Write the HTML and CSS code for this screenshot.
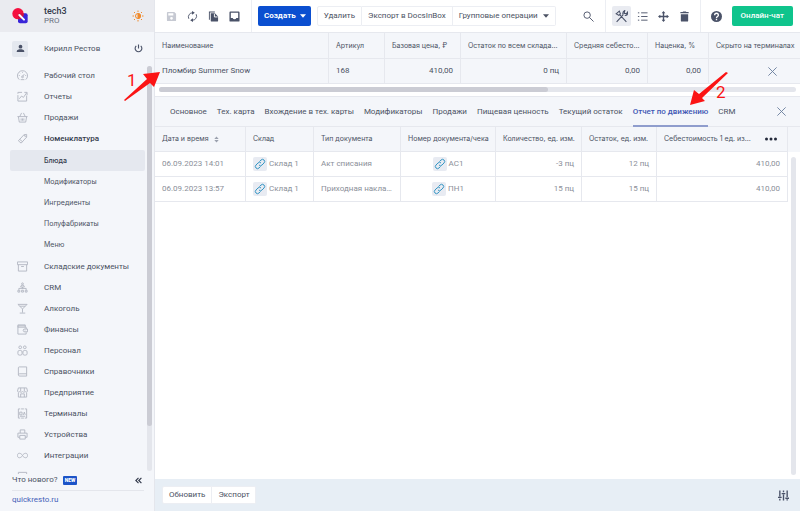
FILE: index.html
```html
<!DOCTYPE html>
<html lang="ru">
<head>
  <meta charset="UTF-8">
  <meta name="viewport" content="width=device-width, initial-scale=1">
  <title>Quick Resto — Блюда</title>
  <link rel="stylesheet" href="styles.css">
</head>
<body>
  <svg class="sprite" aria-hidden="true">
    <symbol id="i-link" viewBox="0 0 24 24"><path d="M10 14a4 4 0 0 0 6 0l4-4a4 4 0 0 0-6-6l-3 3M14 10a4 4 0 0 0-6 0l-4 4a4 4 0 0 0 6 6l3-3"/></symbol>
    <symbol id="i-close" viewBox="0 0 24 24"><path d="M3 3l18 18M21 3L3 21"/></symbol>
    <symbol id="i-caret" viewBox="0 0 10 6"><path d="M0 0h10L5 6z"/></symbol>
  </svg>

  <aside class="sidebar">
    <header class="brand">
      <svg class="logo" viewBox="0 0 48 48">
        <rect x="18" y="16" width="29" height="30" rx="6" fill="#3a25d8"/>
        <circle cx="18" cy="17" r="17" fill="#f5103f"/>
        <path d="M18 34a17 17 0 0 0 17-17v-1H22q-4 0-4 5z" fill="#d3133f"/>
        <path d="M22 21l14 14" stroke="#fff" stroke-width="6" stroke-linecap="round"/>
      </svg>
      <div class="brand-name">
        <b>tech3</b>
        <span>PRO</span>
      </div>
      <button class="icon-btn" aria-label="Тема">
        <svg class="sun" viewBox="0 0 24 24"><circle cx="12" cy="12" r="5"/><path class="fill" d="M12 7a5 5 0 0 1 0 10z"/><path d="M12 1v3M12 20v3M1 12h3M20 12h3M4 4l2 2M18 18l2 2M4 20l2-2M18 6l2-2"/></svg>
      </button>
    </header>

    <div class="user">
      <span class="avatar">
        <svg viewBox="0 0 24 24"><circle cx="12" cy="7" r="5"/><path d="M2 21v-2c0-4 6-5 10-5s10 1 10 5v2z"/></svg>
      </span>
      <span class="user-name">Кирилл Рестов</span>
      <button class="icon-btn" aria-label="Выход">
        <svg class="power" viewBox="0 0 24 24"><path d="M12 1v11M6 5a9 9 0 1 0 12 0"/></svg>
      </button>
    </div>

    <div class="nav-wrap">
      <nav class="nav">
        <a href="#"><svg viewBox="0 0 24 24"><path d="M5 21a11 11 0 1 1 14 0M8 21h8M12 14l4-5M12 4v2M4 12h2M18 12h2M6 6l1 1"/><circle cx="12" cy="15" r="2"/></svg>Рабочий стол</a>
        <a href="#"><svg viewBox="0 0 24 24"><path d="M2 9v13h19V10M2 6V3h9M5 17l5-6 4 3 7-10M16 3h6v6"/></svg>Отчеты</a>
        <a href="#"><svg viewBox="0 0 24 24"><path d="M1 10h22M3 10l2 12h14l2-12M6 10l4-8M18 10l-4-8M9 14v5M12 14v5M15 14v5"/></svg>Продажи</a>
        <a href="#" class="open"><svg viewBox="0 0 24 24"><path d="M3 17L15 4l6-1 0 6L9 22zM15 4l6 5M6 14l6 5M17 7v1"/></svg>Номенклатура</a>
        <div class="subnav">
          <a href="#" class="active">Блюда</a>
          <a href="#">Модификаторы</a>
          <a href="#">Ингредиенты</a>
          <a href="#">Полуфабрикаты</a>
          <a href="#">Меню</a>
        </div>
        <a href="#"><svg viewBox="0 0 24 24"><path d="M1 2h22v6H1zM3 8v14h18V8M9 12h6"/></svg>Складские документы</a>
        <a href="#"><svg viewBox="0 0 24 24"><circle cx="12" cy="4" r="2"/><path d="M8 11q0-4 4-4t4 4zM12 11v3M4 17v-3h16v3"/><path d="M2 22v-4h4v4zM10 22v-4h4v4zM18 22v-4h4v4z"/></svg>CRM</a>
        <a href="#"><svg viewBox="0 0 24 24"><path d="M2 3h20l-10 10zM12 13v8M6 22h12M6 7h12"/></svg>Алкоголь</a>
        <a href="#"><svg viewBox="0 0 24 24"><path d="M2 5v17h18v-4M20 11V7H2V2h16v5M2 4h16M15 11h8v6h-8q-3-3 0-6zM17 14h1"/></svg>Финансы</a>
        <a href="#"><svg viewBox="0 0 24 24"><circle cx="7" cy="5" r="3"/><circle cx="17" cy="5" r="3"/><rect x="2" y="12" width="9" height="10" rx="3"/><rect x="13" y="12" width="9" height="10" rx="3"/></svg>Персонал</a>
        <a href="#"><svg viewBox="0 0 24 24"><path d="M5 2h16v20H6q-3 0-3-3V4q0-2 2-2zM3 19q0-2 3-2h15"/></svg>Справочники</a>
        <a href="#"><svg viewBox="0 0 24 24"><path d="M3 2h18l2 7q-2 4-5 1-3 3-6 0-3 3-6 0-3 3-5-1zM8 2v7M16 2v7M3 12v10h18V12M8 22v-7h8v7"/></svg>Предприятие</a>
        <a href="#"><svg viewBox="0 0 24 24"><path d="M7 2H3v20h4M17 2h4v20h-4M9 2h6M9 22h6M6 9h5v6H6zM14 15l2-6 2 6M6 18h12"/></svg>Терминалы</a>
        <a href="#"><svg viewBox="0 0 24 24"><path d="M7 9V2h10v7M6 18H2V9h20v9h-4M6 14h12v8H6z"/></svg>Устройства</a>
        <a href="#"><svg viewBox="0 0 24 24"><path d="M12 12c-3-6-11-7-11 0s8 6 11 0 11-7 11 0-8 6-11 0z"/></svg>Интеграции</a>
        <a href="#"><svg viewBox="0 0 24 24"><path d="M3 3h18v18H3z"/></svg>Подписка и оплата</a>
      </nav>
      <div class="vbar"><div class="vbar-thumb"></div></div>
    </div>

    <footer class="side-foot">
      <div class="news">
        <span>Что нового?</span>
        <span class="new">NEW</span>
        <button class="icon-btn" aria-label="Свернуть">
          <svg class="collapse" viewBox="0 0 24 24"><path d="M12 3l-9 9 9 9M22 3l-9 9 9 9"/></svg>
        </button>
      </div>
      <a class="site" href="#">quickresto.ru</a>
    </footer>
  </aside>

  <main class="main">
    <div class="toolbar">
      <div class="tools">
        <button class="icon-btn muted" aria-label="Сохранить"><svg viewBox="0 0 24 24"><path fill-rule="evenodd" d="M2 4q0-2 2-2h14l4 4v14q0 2-2 2H4q-2 0-2-2zM5 5v5h11V5zM12 13a3 3 0 1 0 0 6 3 3 0 0 0 0-6z"/></svg></button>
        <button class="icon-btn" aria-label="Обновить"><svg class="line thin" viewBox="0 0 24 24"><path d="M4 17a9 9 0 0 1 9-13M20 7a9 9 0 0 1-9 13"/><path class="fill" d="M11 0l6 4-6 4zM13 16l-6 4 6 4z"/></svg></button>
        <button class="icon-btn" aria-label="Копировать"><svg viewBox="0 0 24 24"><path d="M2 1h13v2H4v16H2zM6 5h9l7 7v10q0 1-1 1H7q-1 0-1-1z"/><path d="M14 6v7h7" fill="none" stroke="#fff" stroke-width="2"/></svg></button>
        <button class="icon-btn" aria-label="Архив"><svg viewBox="0 0 24 24"><path fill-rule="evenodd" d="M3 1h18q2 0 2 2v18q0 2-2 2H3q-2 0-2-2V3q0-2 2-2zM4 4v11h4q1 3 4 3t4-3h4V4z"/></svg></button>
      </div>
      <div class="actions">
        <button class="create">Создать <svg class="caret"><use href="#i-caret"/></svg></button>
        <div class="btn-group">
          <button>Удалить</button>
          <button>Экспорт в DocsInBox</button>
          <button>Групповые операции <svg class="caret"><use href="#i-caret"/></svg></button>
        </div>
      </div>
      <button class="icon-btn search" aria-label="Поиск"><svg class="line thin" viewBox="0 0 24 24"><circle cx="9" cy="9" r="7"/><path d="M14 14l9 9"/></svg></button>
      <div class="views">
        <button class="icon-btn pressed" aria-label="Инструменты"><svg class="line tool" viewBox="0 0 24 24"><path d="M3 22L15 9M9 9l12 13M2 7l6-5 2 5-3 3zM15 9q-2-5 3-8l-1 5 4 1 2-3q1 7-5 6"/></svg></button>
        <button class="icon-btn" aria-label="Список"><svg class="line thin" viewBox="0 0 24 24"><path d="M2 4h3M9 4h14M2 12h3M9 12h14M2 20h3M9 20h14"/></svg></button>
        <button class="icon-btn" aria-label="Переместить"><svg class="line" viewBox="0 0 24 24"><path d="M12 3v18M3 12h18"/><path class="fill" d="M12 0l4 5H8zM12 24l4-5H8zM0 12l5-4v8zM24 12l-5-4v8z"/></svg></button>
        <button class="icon-btn" aria-label="Корзина"><svg viewBox="0 0 24 24"><path d="M3 2h5l1-1h6l1 1h5v3H3zM4 7h16v14q0 2-2 2H6q-2 0-2-2z"/></svg></button>
      </div>
      <div class="help">
        <button class="icon-btn" aria-label="Помощь"><svg class="question" viewBox="0 0 24 24"><circle cx="12" cy="12" r="12"/><path d="M8 9q0-4 4-4t4 4c0 3-4 3-4 6M12 17v3" fill="none" stroke="#fff" stroke-width="3"/></svg></button>
        <button class="chat">Онлайн-чат</button>
      </div>
    </div>

    <table class="grid goods">
      <colgroup><col class="w174"><col class="w56"><col class="w76"><col class="w106"><col class="w81"><col class="w61"><col></colgroup>
      <thead>
        <tr>
          <th>Наименование</th>
          <th>Артикул</th>
          <th>Базовая цена, ₽</th>
          <th>Остаток по всем складам, ед. изм.</th>
          <th>Средняя себестоимость</th>
          <th>Наценка, %</th>
          <th>Скрыто на терминалах</th>
        </tr>
      </thead>
      <tbody>
        <tr>
          <td>Пломбир Summer Snow</td>
          <td>168</td>
          <td class="num">410,00</td>
          <td class="num">0 пц</td>
          <td class="num">0,00</td>
          <td class="num">0,00</td>
          <td class="hidden-mark"><svg class="cross"><use href="#i-close"/></svg></td>
        </tr>
      </tbody>
    </table>
    <div class="hbar"><div class="hbar-thumb"></div></div>

    <div class="tabs">
      <a href="#">Основное</a>
      <a href="#">Тех. карта</a>
      <a href="#">Вхождение в тех. карты</a>
      <a href="#">Модификаторы</a>
      <a href="#">Продажи</a>
      <a href="#">Пищевая ценность</a>
      <a href="#">Текущий остаток</a>
      <a href="#" class="active">Отчет по движению</a>
      <a href="#">CRM</a>
      <button class="icon-btn" aria-label="Закрыть"><svg class="cross"><use href="#i-close"/></svg></button>
    </div>

    <div class="report">
      <table class="grid moves">
        <colgroup><col class="w91"><col class="w68"><col class="w87"><col class="w95"><col class="w86"><col class="w75"><col></colgroup>
        <thead>
          <tr>
            <th>Дата и время <svg class="sort" viewBox="0 0 10 16"><path d="M0 7l5-6 5 6zM0 9l5 6 5-6z"/></svg></th>
            <th>Склад</th>
            <th>Тип документа</th>
            <th>Номер документа/чека</th>
            <th>Количество, ед. изм.</th>
            <th>Остаток, ед. изм.</th>
            <th><div class="last-head"><span>Себестоимость 1 ед. измерения</span><button class="icon-btn" aria-label="Колонки"><svg class="dots" viewBox="0 0 24 8"><circle cx="3" cy="4" r="3"/><circle cx="12" cy="4" r="3"/><circle cx="21" cy="4" r="3"/></svg></button></div></th>
          </tr>
        </thead>
        <tbody>
          <tr>
            <td>06.09.2023 14:01</td>
            <td><div class="ref"><a href="#" aria-label="Открыть"><svg><use href="#i-link"/></svg></a>Склад 1</div></td>
            <td>Акт списания</td>
            <td><div class="ref center"><a href="#" aria-label="Открыть"><svg><use href="#i-link"/></svg></a>АС1</div></td>
            <td class="num">-3 пц</td>
            <td class="num">12 пц</td>
            <td class="num">410,00</td>
          </tr>
          <tr>
            <td>06.09.2023 13:57</td>
            <td><div class="ref"><a href="#" aria-label="Открыть"><svg><use href="#i-link"/></svg></a>Склад 1</div></td>
            <td>Приходная накладная</td>
            <td><div class="ref center"><a href="#" aria-label="Открыть"><svg><use href="#i-link"/></svg></a>ПН1</div></td>
            <td class="num">15 пц</td>
            <td class="num">15 пц</td>
            <td class="num">410,00</td>
          </tr>
        </tbody>
      </table>
      <div class="gutter"><div class="gutter-bar"></div></div>
    </div>

    <footer class="bottom">
      <div class="btn-group">
        <button>Обновить</button>
        <button>Экспорт</button>
      </div>
      <button class="icon-btn" aria-label="Настройки"><svg class="line" viewBox="0 0 24 24"><path d="M4 1v13M4 19v4M12 1v4M12 10v13M20 1v14M20 20v3M0 16h8M8 8h8M16 18h8"/></svg></button>
    </footer>
  </main>

  <!-- callouts over the page -->
  <div class="callout first">
    <svg viewBox="0 0 36 30"><path d="M0 28L23 7l-4-5L36 0l-6 15-4-4L1 29z"/></svg>
    <span>1</span>
  </div>
  <div class="callout second">
    <svg viewBox="0 0 38 34"><path d="M36 0L9 22 4 18 0 33l15-4-3-3L38 1z"/></svg>
    <span>2</span>
  </div>
</body>
</html>
```
FILE: styles.css
```css
* {
  box-sizing: border-box;
}
body {
  margin: 0;
  display: flex;
  height: 100vh;
  overflow: hidden;
  font-family: Roboto, "Liberation Sans", sans-serif;
  font-size: 8px;
  line-height: 12px;
  color: #4b5263;
  background: #fff;
}
a {
  color: inherit;
  text-decoration: none;
}
button {
  font: inherit;
  color: inherit;
  cursor: pointer;
}
svg {
  display: block;
  flex: none;
}
.sprite {
  position: absolute;
  width: 0;
  height: 0;
}
.icon-btn {
  display: flex;
  align-items: center;
  justify-content: center;
  padding: 0;
  border: 0;
  background: none;
  color: #4a5268;
}
.icon-btn svg {
  width: 11px;
  height: 11px;
  fill: currentColor;
}
.icon-btn .line {
  fill: none;
  stroke: currentColor;
  stroke-width: 3;
}
.icon-btn .thin {
  stroke-width: 2;
}
.icon-btn .tool {
  width: 13px;
  height: 13px;
  stroke-width: 2;
}
.icon-btn .line .fill {
  fill: currentColor;
  stroke: none;
}

/* sidebar */
.sidebar {
  flex: none;
  display: flex;
  flex-direction: column;
  width: 155px;
  background: #f4f6fa;
  border-right: 1px solid #e4e6ec;
}
.brand {
  display: flex;
  align-items: center;
  height: 32px;
  padding: 0 10px 0 12px;
  background: #eaebf0;
}
.brand .logo {
  width: 16px;
  height: 16px;
}
.brand-name {
  flex: 1;
  display: flex;
  flex-direction: column;
  margin-left: 16px;
  line-height: 10px;
}
.brand-name b {
  font-weight: 500;
  font-size: 9px;
  color: #343b4c;
}
.brand-name span {
  color: #6b7180;
}
.icon-btn .sun {
  width: 12px;
  height: 12px;
  fill: none;
  stroke: #f08a2c;
  stroke-width: 2;
}
.icon-btn .sun .fill {
  fill: #f08a2c;
}
.user {
  display: flex;
  align-items: center;
  height: 33px;
  padding: 0 11px 0 12px;
}
.avatar {
  display: flex;
  align-items: center;
  justify-content: center;
  width: 16px;
  height: 16px;
  border-radius: 2px;
  background: #e4e8ef;
}
.avatar svg {
  width: 9px;
  height: 9px;
  fill: #4a5268;
}
.user-name {
  flex: 1;
  margin-left: 16px;
}
.icon-btn .power {
  width: 9px;
  height: 9px;
  fill: none;
  stroke: #4a5268;
  stroke-width: 3;
}
.nav-wrap {
  flex: 1;
  display: flex;
  min-height: 0;
  overflow: hidden;
}
.nav {
  flex: 1;
  padding-left: 10px;
}
.nav a {
  display: flex;
  align-items: center;
  gap: 16px;
  height: 21px;
  padding-left: 7px;
  white-space: nowrap;
}
.nav svg {
  width: 11px;
  height: 11px;
  fill: none;
  stroke: #b2b7c2;
  stroke-width: 2;
}
.nav .open {
  color: #343b4c;
  font-weight: 500;
}
.subnav {
  padding: 1px 0;
  font-family: Inter, Roboto, sans-serif;
  font-size: 7px;
}
.nav .subnav a {
  padding-left: 34px;
}
.nav .subnav .active {
  border-radius: 2px;
  background: #e5e8ef;
  color: #343b4c;
  font-weight: 500;
}
.vbar {
  width: 5px;
  margin: 1px 2px 3px;
  border-radius: 3px;
  background: #e4e6ec;
}
.vbar-thumb {
  height: 89%;
  border-radius: 3px;
  background: #cbccd4;
}
.side-foot {
  padding: 0 10px 5px 12px;
}
.news {
  display: flex;
  align-items: center;
  gap: 5px;
  height: 17px;
  padding-bottom: 4px;
  border-bottom: 1px solid #e4e6ec;
}
.news .icon-btn {
  margin: 0 2px 0 auto;
}
.new {
  padding: 0 2px;
  border-radius: 1px;
  background: #1c54c8;
  color: #fff;
  font-size: 5px;
  font-weight: 900;
  line-height: 9px;
}
.icon-btn .collapse {
  width: 7px;
  height: 7px;
  fill: none;
  stroke: #343b4c;
  stroke-width: 4;
}
.site {
  display: block;
  margin-top: 3px;
  color: #4560b8;
}

/* toolbar */
.main {
  flex: 1;
  min-width: 0;
  display: flex;
  flex-direction: column;
}
.toolbar {
  display: flex;
  height: 32px;
}
.tools,
.views,
.actions,
.help {
  display: flex;
  align-items: center;
}
.tools {
  gap: 10px;
  padding: 0 11px;
  border-right: 1px solid #eceef3;
}
.icon-btn.muted {
  color: #c6c9d2;
}
.actions {
  flex: 1;
  gap: 6px;
  padding-left: 6px;
}
.create,
.chat {
  display: flex;
  align-items: center;
  gap: 4px;
  height: 20px;
  padding: 0 5px 0 6px;
  border: 0;
  border-radius: 2px;
  background: #0b4fd0;
  color: #fff;
  font-weight: 700;
}
.chat {
  padding: 0 9px;
  background: #0fc48c;
  font-weight: 500;
}
.caret {
  width: 6px;
  height: 4px;
  fill: currentColor;
}
.btn-group {
  display: flex;
}
.btn-group button {
  display: flex;
  align-items: center;
  gap: 5px;
  height: 20px;
  padding: 0 6px;
  border: 1px solid #eceef3;
  border-left-width: 0;
  background: #fff;
  white-space: nowrap;
}
.btn-group button:first-child {
  border-left-width: 1px;
  border-radius: 2px 0 0 2px;
}
.btn-group button:last-child {
  border-radius: 0 2px 2px 0;
}
.search {
  width: 32px;
}
.views {
  gap: 2px;
  padding: 0 6px;
  border: solid #eceef3;
  border-width: 0 1px;
}
.views .icon-btn {
  width: 19px;
  height: 20px;
  border-radius: 2px;
}
.views .pressed {
  background: #e9ebf1;
}
.help {
  gap: 10px;
  padding: 0 7px 0 10px;
}

/* tables */
.grid {
  width: 100%;
  table-layout: fixed;
  border-collapse: separate;
  border-spacing: 0;
}
.grid th,
.grid td {
  height: 25px;
  padding: 0 7px;
  border-right: 1px solid #e6e8ee;
  border-bottom: 1px solid #e6e8ee;
  overflow: hidden;
  text-align: left;
  text-overflow: ellipsis;
  white-space: nowrap;
}
.grid th {
  padding-right: 5px;
  background: #f4f6fa;
  font-family: Inter, Roboto, sans-serif;
  font-size: 7px;
  font-weight: 400;
}
.grid .num {
  text-align: right;
}
.goods th {
  height: 27px;
  border-top: 1px solid #e6e8ee;
}
.goods td {
  background: #f4f6fa;
}
.goods th:last-child,
.goods td:last-child {
  border-right: 0;
}
.w174 { width: 174px; }
.w56 { width: 56px; }
.w76 { width: 76px; }
.w106 { width: 106px; }
.w81 { width: 81px; }
.w61 { width: 61px; }
.w91 { width: 91px; }
.w68 { width: 68px; }
.w87 { width: 87px; }
.w95 { width: 95px; }
.w86 { width: 86px; }
.w75 { width: 75px; }
.cross,
.icon-btn .cross {
  width: 11px;
  height: 11px;
  stroke: #6b7f9e;
  stroke-width: 2;
}
.grid .hidden-mark {
  padding-left: 43px;
}
.hidden-mark svg {
  margin: 0 auto;
}
.hbar {
  height: 5px;
  margin: 3px 4px 4px;
  border-radius: 3px;
  background: #e4e6ec;
}
.hbar-thumb {
  width: 61%;
  height: 5px;
  border-radius: 3px;
  background: #cbccd4;
}

/* tabs */
.tabs {
  display: flex;
  gap: 10px;
  height: 31px;
  padding: 0 13px 0 15px;
  border: solid #e6e8ee;
  border-width: 1px 0;
  background: #f4f6fa;
}
.tabs a {
  height: 30px;
  line-height: 29px;
  white-space: nowrap;
}
.tabs .active {
  border-bottom: 2px solid #8f9dcd;
  color: #4157b4;
  font-weight: 500;
}
.tabs .icon-btn {
  margin-left: auto;
}

/* report */
.report {
  flex: 1;
  display: flex;
  min-height: 0;
}
.moves {
  flex: 1;
  align-self: flex-start;
}
.moves td {
  color: #8b8f99;
}
.moves .sort {
  display: inline-block;
  width: 5px;
  height: 7px;
  margin-left: 3px;
  vertical-align: middle;
  fill: #9ba1ae;
}
.last-head {
  display: flex;
  align-items: center;
  gap: 12px;
}
.last-head span {
  flex: 1;
  overflow: hidden;
  text-overflow: ellipsis;
}
.last-head .icon-btn {
  margin-right: 5px;
}
.icon-btn .dots {
  width: 12px;
  height: 4px;
  fill: #23293a;
}
.ref {
  display: flex;
  align-items: center;
  gap: 2px;
}
.ref.center {
  justify-content: center;
}
.ref a {
  padding: 1px;
  border-radius: 2px;
  background: #e8ebf2;
}
.ref svg {
  width: 12px;
  height: 12px;
  fill: none;
  stroke: #3596c4;
  stroke-width: 2;
}
.gutter {
  width: 12px;
  padding: 30px 4px 4px 3px;
  background: linear-gradient(#f4f6fa 25px, #fff 25px);
}
.gutter-bar {
  height: 100%;
  border-radius: 3px;
  background: #e4e6ec;
}

/* bottom bar */
.bottom {
  display: flex;
  align-items: center;
  justify-content: space-between;
  height: 32px;
  padding: 0 11px 0 7px;
  background: #e7eef5;
}
.bottom .btn-group button {
  height: 18px;
}

/* callouts */
.callout {
  position: absolute;
  color: #fb1414;
  font-size: 17px;
  line-height: 17px;
}
.callout svg {
  fill: currentColor;
}
.callout span {
  position: absolute;
}
.first {
  left: 124px;
  top: 72px;
}
.first svg {
  width: 36px;
  height: 30px;
}
.first span {
  left: 3px;
  top: 0;
}
.second {
  left: 690px;
  top: 72px;
}
.second svg {
  width: 38px;
  height: 34px;
}
.second span {
  left: 26px;
  top: 12px;
}
```
